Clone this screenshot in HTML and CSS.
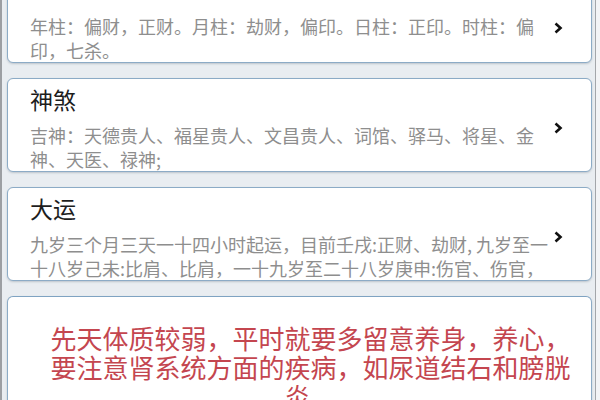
FILE: index.html
```html
<!DOCTYPE html>
<html lang="zh-CN">
<head>
    <meta charset="UTF-8">
    <meta name="viewport" content="width=device-width, initial-scale=1.0">
    <title>八字详批</title>
    <link rel="stylesheet" href="styles.css">
</head>
<body>
    <div class="screen">
        <div class="list">
            <div class="card card-first">
                <div class="info">
                    <p class="card-text">年柱：偏财，正财。月柱：劫财，偏印。日柱：正印。时柱：偏印，七杀。</p>
                </div>
                <svg class="chevron" width="10" height="12" viewBox="0 0 10 12"><path d="M2.5 1.5 L7.5 6 L2.5 10.5" fill="none" stroke="#111" stroke-width="2.6"/></svg>
            </div>

            <div class="card">
                <div class="info">
                    <h2 class="card-title">神煞</h2>
                    <p class="card-text">吉神：天德贵人、福星贵人、文昌贵人、词馆、驿马、将星、金神、天医、禄神;</p>
                </div>
                <svg class="chevron" width="10" height="12" viewBox="0 0 10 12"><path d="M2.5 1.5 L7.5 6 L2.5 10.5" fill="none" stroke="#111" stroke-width="2.6"/></svg>
            </div>

            <div class="card">
                <div class="info">
                    <h2 class="card-title">大运</h2>
                    <p class="card-text">九岁三个月三天一十四小时起运，目前壬戌:正财、劫财, 九岁至一十八岁己未:比肩、比肩，一十九岁至二十八岁庚申:伤官、伤官，</p>
                </div>
                <svg class="chevron" width="10" height="12" viewBox="0 0 10 12"><path d="M2.5 1.5 L7.5 6 L2.5 10.5" fill="none" stroke="#111" stroke-width="2.6"/></svg>
            </div>

            <div class="card card-note">
                <p class="note">先天体质较弱，平时就要多留意养身，养心，要注意肾系统方面的疾病，如尿道结石和膀胱炎。</p>
            </div>
        </div>
    </div>
</body>
</html>
```

FILE: styles.css
```css
html, body {
    margin: 0;
    height: 100%;
    overflow: hidden;
}

body {
    font-family: "Noto Sans CJK SC", "Noto Sans", sans-serif;
    background: #f3f4f6;
    text-spacing-trim: space-all;
}

.screen {
    width: 585px;
    height: 100%;
    padding: 0 3px 0 5px;
    background: #e9edf1;
    border-left: 2px solid #9c9fa3;
    border-right: 1px solid #a3a6aa;
    overflow: hidden;
}

.list {
    display: flex;
    flex-direction: column;
    gap: 15px;
    margin-top: -12px;
}

.card {
    display: flex;
    align-items: center;
    gap: 4px;
    background: #fff;
    border: 1px solid #8cabc6;
    border-radius: 6px;
    padding: 5px 28px 0 22px;
    box-shadow: 0 1px 2px rgba(60, 80, 100, 0.25);
}

.info {
    flex: 1;
    min-width: 0;
}

.card-title {
    margin: 0;
    font-size: 23px;
    font-weight: 400;
    line-height: 30px;
    color: #1d1d1d;
}

.card-text {
    margin: 9px 0 0 0;
    font-size: 18px;
    line-height: 24px;
    max-height: 48px;
    overflow: hidden;
    color: #8e8e8e;
}

/* first card is scrolled past its title */
.card-first .card-text {
    margin-top: 20px;
}

.chevron {
    flex: none;
}

.card-note {
    display: block;
    height: 140px;
    padding: 26px 18px 0 40px;
    border-top-color: #7fa3c2;
}

.note {
    margin: 0;
    font-size: 26px;
    line-height: 29px;
    text-align: center;
    color: #c4464f;
}
```
